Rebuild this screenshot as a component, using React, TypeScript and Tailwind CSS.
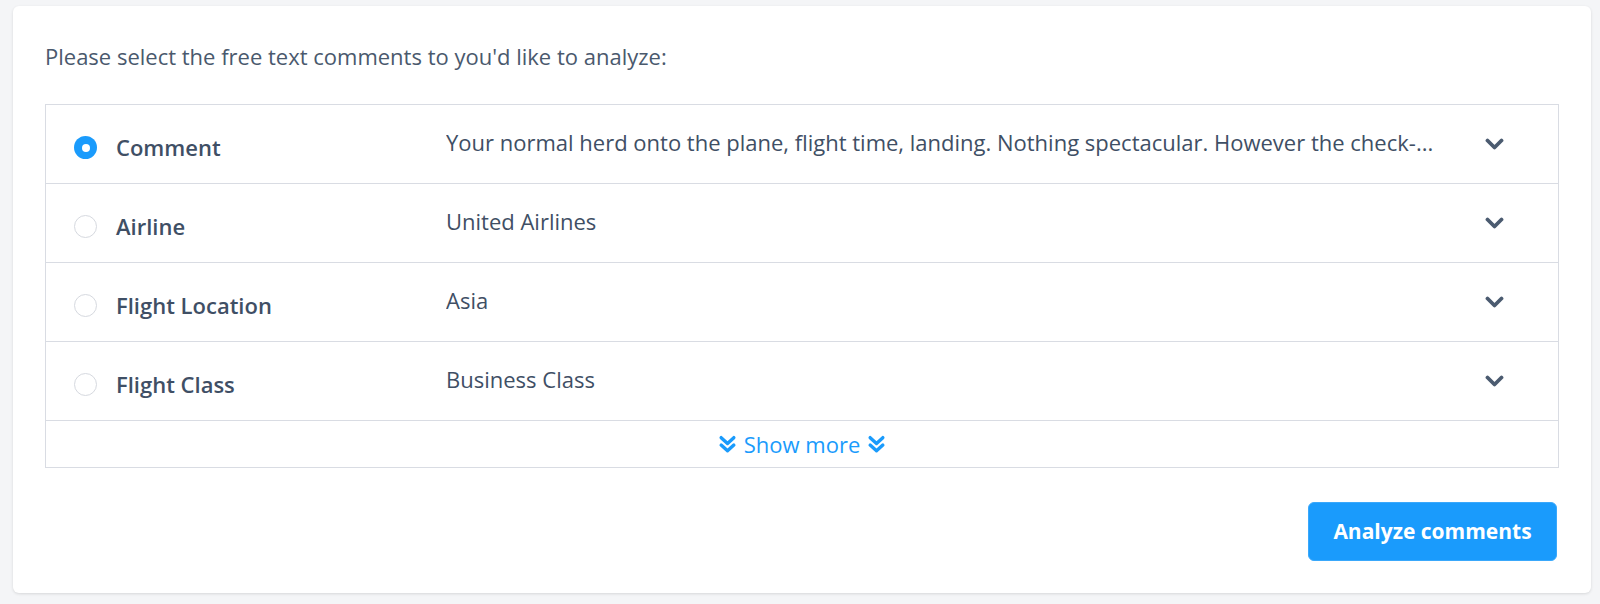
import React, { useState } from 'react';

type Field = { key: string; label: string; value: string };

const fields: Field[] = [
    { key: 'comment', label: 'Comment', value: "Your normal herd onto the plane, flight time, landing. Nothing spectacular. However the check-..." },
    { key: 'airline', label: 'Airline', value: 'United Airlines' },
    { key: 'location', label: 'Flight Location', value: 'Asia' },
    { key: 'class', label: 'Flight Class', value: 'Business Class' },
];

const ChevronDown = () => (
    <svg width="19" height="13" viewBox="0 0 19 13" fill="none">
        <path d="M2.5 2.5 L9.5 9.5 L16.5 2.5" stroke="#4b5b70" strokeWidth="3.8" strokeLinecap="round" strokeLinejoin="round" />
    </svg>
);

const DoubleChevron = () => (
    <svg width="19" height="19" viewBox="0 0 18 18" fill="none">
        <path d="M3 2.5 L9 8 L15 2.5" stroke="#1a9bfc" strokeWidth="3.2" strokeLinecap="round" strokeLinejoin="round" />
        <path d="M3 9.5 L9 15 L15 9.5" stroke="#1a9bfc" strokeWidth="3.2" strokeLinecap="round" strokeLinejoin="round" />
    </svg>
);

const Radio = ({ checked }: { checked: boolean }) =>
    checked ? (
        <span className="w-[23px] h-[23px] rounded-full bg-[#1a9bfc] flex items-center justify-center shrink-0">
            <span className="w-[8px] h-[8px] rounded-full bg-white" />
        </span>
    ) : (
        <span className="w-[23px] h-[23px] rounded-full border-[1.5px] border-[#d6d9df] bg-white shrink-0" />
    );

const App: React.FC = () => {
    const [selected, setSelected] = useState('comment');

    return (
        <div className="min-h-screen bg-[#f4f5f7] pt-[6px] pl-[13px] pr-[9px] pb-[11px]" style={{ fontFamily: '"Open Sans", "Noto Sans", sans-serif' }}>
            <div className="bg-white rounded-[6px] shadow-[0_1px_3px_rgba(0,0,0,0.12)] pt-[36px] px-[32px] pb-[32px]">
                <p className="text-[22px] leading-[28px] text-[#4a596d] mb-[34px]">
                    Please select the free text comments to you'd like to analyze:
                </p>

                <div className="border border-[#d9dce3]">
                    {fields.map((f) => (
                        <div
                            key={f.key}
                            onClick={() => setSelected(f.key)}
                            className="h-[79px] flex items-center border-b border-[#d9dce3] cursor-pointer pl-[28px] pr-[54px]"
                        >
                            <div className="flex items-center w-[372px] mt-[7px] shrink-0">
                                <Radio checked={selected === f.key} />
                                <span className="ml-[19px] text-[22px] font-semibold text-[#3f4f65]">{f.label}</span>
                            </div>
                            <span className="flex-1 -mt-[4px] text-[22px] text-[#3f4f65] whitespace-nowrap overflow-hidden">{f.value}</span>
                            <ChevronDown />
                        </div>
                    ))}
                    <div className="h-[46px] flex items-center justify-center gap-[7px] text-[22px] text-[#1a9bfc] cursor-pointer">
                        <DoubleChevron />
                        <span>Show more</span>
                        <DoubleChevron />
                    </div>
                </div>

                <div className="flex justify-end mt-[34px] pr-[2px]">
                    <button className="w-[249px] h-[59px] rounded-[6px] bg-[#1a9bfc] border border-[#3aa8fb] text-white text-[21px] font-bold">
                        Analyze comments
                    </button>
                </div>
            </div>
        </div>
    );
};

export default App;
